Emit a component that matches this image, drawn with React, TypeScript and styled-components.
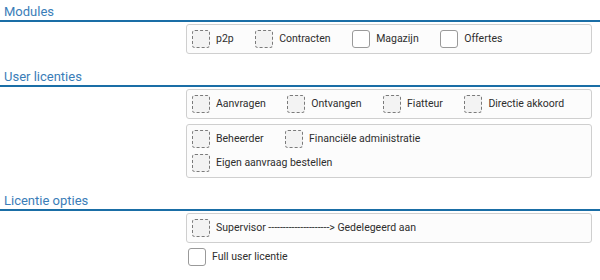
import styled, { createGlobalStyle } from "styled-components";
import * as React from "react";

const GlobalStyle = createGlobalStyle`
    html, body {
        margin: 0;
        padding: 0;
        background: #ffffff;
    }
    body {
        font-family: Roboto, "Liberation Sans", sans-serif;
        color: #333333;
    }
`;

const Page = styled.div`
    width: 600px;
    height: 280px;
    overflow: hidden;
`;

const Section = styled.section`
    margin-bottom: 11px;
`;

const SectionTitle = styled.h3`
    margin: 0;
    padding: 4px 0 0 4px;
    height: 16px;
    line-height: 16px;
    font-size: 13px;
    font-weight: 400;
    color: #3a7db8;
    border-bottom: 2px solid #1a6ea6;
`;

const SectionBody = styled.div`
    display: grid;
    grid-template-columns: 186px 1fr;
    padding: 2px 8px 0 0;
    border-left: 1px solid #e6e6e6;
    margin-left: -1px;
`;

const Fields = styled.div`
    grid-column: 2;
    display: flex;
    flex-direction: column;
    gap: 5px;
`;

const Group = styled.div`
    display: flex;
    flex-direction: column;
    gap: 6px;
    padding: 5px;
    border: 1px solid #cfcfcf;
    border-radius: 3px;
    background: #fcfcfc;
`;

const Row = styled.div`
    display: flex;
    align-items: center;
    gap: 21.5px;
`;

const Option = styled.label<{ $loose?: boolean }>`
    display: flex;
    align-items: center;
    gap: 6px;
    font-size: 10.5px;
    line-height: 18px;
    color: #2e2e2e;
    margin-left: ${({ $loose }) => ($loose ? "2px" : "0")};
`;

const Box = styled.span<{ $dashed?: boolean }>`
    flex: none;
    width: 16px;
    height: 16px;
    border-radius: 3px;
    border: 1px ${({ $dashed }) => ($dashed ? "dashed #7a7a7a" : "solid #9a9a9a")};
    background: ${({ $dashed }) => ($dashed ? "#f3f3f3" : "#ffffff")};
`;

type Item = { label: string; dashed?: boolean };

const CheckOption: React.FC<Item & { loose?: boolean }> = ({ label, dashed, loose }) => (
    <Option $loose={loose}>
        <Box $dashed={dashed} />
        {label}
    </Option>
);

const modules: Item[] = [
    { label: "p2p", dashed: true },
    { label: "Contracten", dashed: true },
    { label: "Magazijn" },
    { label: "Offertes" },
];

const userRoles: Item[] = [
    { label: "Aanvragen", dashed: true },
    { label: "Ontvangen", dashed: true },
    { label: "Fiatteur", dashed: true },
    { label: "Directie akkoord", dashed: true },
];

export default function App() {
    return (
        <Page>
            <GlobalStyle />
            <Section>
                <SectionTitle>Modules</SectionTitle>
                <SectionBody>
                    <Fields>
                        <Group>
                            <Row>
                                {modules.map((m) => (
                                    <CheckOption key={m.label} {...m} />
                                ))}
                            </Row>
                        </Group>
                    </Fields>
                </SectionBody>
            </Section>

            <Section>
                <SectionTitle>User licenties</SectionTitle>
                <SectionBody>
                    <Fields>
                        <Group>
                            <Row>
                                {userRoles.map((m) => (
                                    <CheckOption key={m.label} {...m} />
                                ))}
                            </Row>
                        </Group>
                        <Group>
                            <Row>
                                <CheckOption label="Beheerder" dashed />
                                <CheckOption label="Financiële administratie" dashed />
                            </Row>
                            <Row>
                                <CheckOption label="Eigen aanvraag bestellen" dashed />
                            </Row>
                        </Group>
                    </Fields>
                </SectionBody>
            </Section>

            <Section>
                <SectionTitle>Licentie opties</SectionTitle>
                <SectionBody>
                    <Fields>
                        <Group>
                            <Row>
                                <CheckOption label="Supervisor ---------------------> Gedelegeerd aan" dashed />
                            </Row>
                        </Group>
                        <CheckOption label="Full user licentie" loose />
                    </Fields>
                </SectionBody>
            </Section>
        </Page>
    );
}
